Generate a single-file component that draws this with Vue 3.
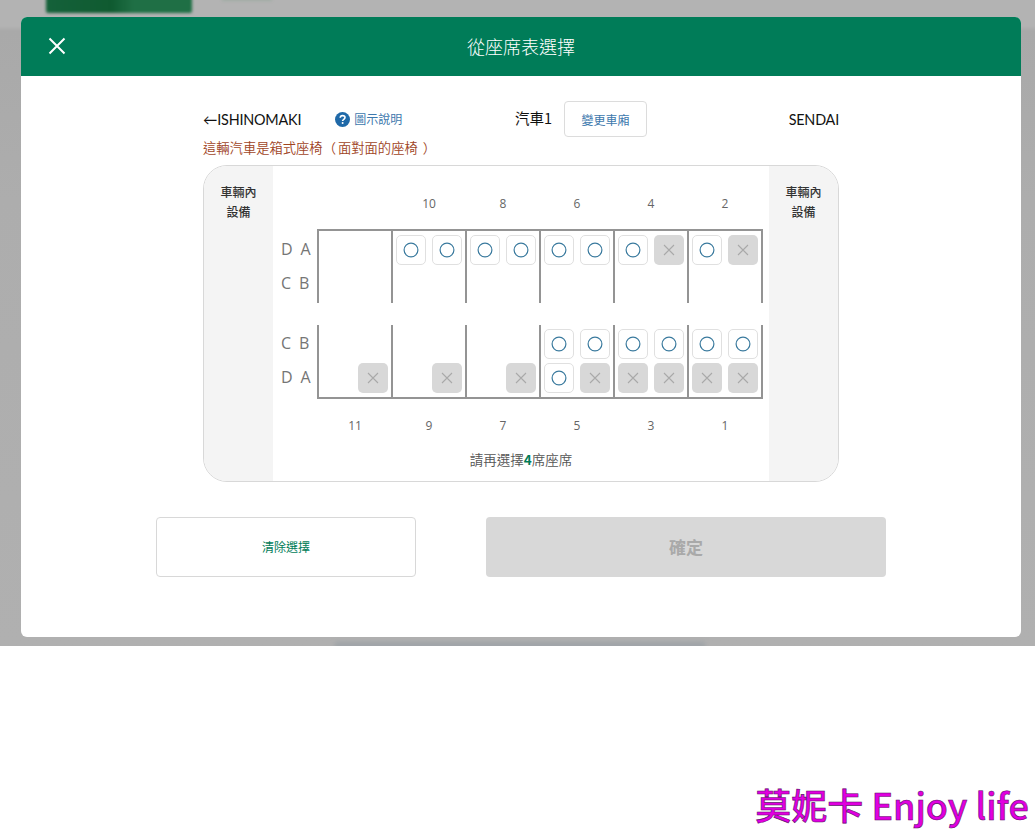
<script setup>
const topNums = [null, 10, 8, 6, 4, 2]
const botNums = [11, 9, 7, 5, 3, 1]
const topCars = [
  ['', '', '', ''],
  ['o', 'o', '', ''],
  ['o', 'o', '', ''],
  ['o', 'o', '', ''],
  ['o', 'x', '', ''],
  ['o', 'x', '', '']
]
const botCars = [
  ['', '', '', 'x'],
  ['', '', '', 'x'],
  ['', '', '', 'x'],
  ['o', 'o', 'o', 'x'],
  ['o', 'o', 'x', 'x'],
  ['o', 'o', 'x', 'x']
]
const topLabels = [['D', 'A'], ['C', 'B']]
const botLabels = [['C', 'B'], ['D', 'A']]
</script>

<template>
  <div class="page">
    <div class="backdrop">
      <div class="blur-green"></div>
      <div class="blur-light"></div>
      <div class="blur-streak"></div>
      <section class="modal">
        <header class="modal-head">
          <svg class="close" width="18" height="18" viewBox="0 0 18 18" aria-label="close">
            <path d="M1.5 1.5 16.5 16.5M16.5 1.5 1.5 16.5" stroke="#fff" stroke-width="2" fill="none" />
          </svg>
          <h1 class="title">從座席表選擇</h1>
        </header>
        <div class="modal-body">
          <div class="content">
            <div class="info-row">
              <div class="info-left">
                <span class="station">←ISHINOMAKI</span>
                <span class="help">
                  <svg width="15" height="15" viewBox="0 0 15 15">
                    <circle cx="7.5" cy="7.5" r="7.5" fill="#1f69a8" />
                    <path d="M5.2 5.8C5.3 4.4 6.3 3.6 7.6 3.6 9 3.6 10 4.4 10 5.6 10 7.3 7.6 7.3 7.6 9" stroke="#fff" stroke-width="1.6" fill="none" />
                    <circle cx="7.6" cy="11.1" r="1" fill="#fff" />
                  </svg>
                  <span class="help-text">圖示說明</span>
                </span>
              </div>
              <div class="info-center">
                <span class="car-name">汽車1</span>
                <button class="change" type="button">變更車廂</button>
              </div>
              <span class="station station-end">SENDAI</span>
            </div>
            <p class="warning">這輛汽車是箱式座椅<span class="paren-open">（</span>面對面的座椅<span class="paren-close">）</span></p>
            <div class="panel">
              <aside class="side">車輛內<br />設備</aside>
              <div class="map">
                <div class="nums nums-top">
                  <span v-for="(n, i) in topNums" :key="i" class="num">{{ n }}</span>
                </div>
                <div class="block">
                  <div class="labels">
                    <div v-for="(r, i) in topLabels" :key="i" class="label-row">
                      <span>{{ r[0] }}</span><span>{{ r[1] }}</span>
                    </div>
                  </div>
                  <div class="cars cars-top">
                    <div v-for="(car, i) in topCars" :key="i" class="car">
                      <div v-for="(s, j) in car" :key="j" class="seat" :class="s">
                        <svg v-if="s === 'o'" width="16" height="16" viewBox="0 0 16 16">
                          <circle cx="8" cy="8" r="6.9" fill="none" stroke="#3a7a9e" stroke-width="1.2" />
                        </svg>
                        <svg v-else-if="s === 'x'" width="12" height="12" viewBox="0 0 12 12">
                          <path d="M1 1 11 11M11 1 1 11" stroke="#a9a9a9" stroke-width="1.1" fill="none" />
                        </svg>
                      </div>
                    </div>
                  </div>
                </div>
                <div class="block block-bot">
                  <div class="labels">
                    <div v-for="(r, i) in botLabels" :key="i" class="label-row">
                      <span>{{ r[0] }}</span><span>{{ r[1] }}</span>
                    </div>
                  </div>
                  <div class="cars cars-bot">
                    <div v-for="(car, i) in botCars" :key="i" class="car">
                      <div v-for="(s, j) in car" :key="j" class="seat" :class="s">
                        <svg v-if="s === 'o'" width="16" height="16" viewBox="0 0 16 16">
                          <circle cx="8" cy="8" r="6.9" fill="none" stroke="#3a7a9e" stroke-width="1.2" />
                        </svg>
                        <svg v-else-if="s === 'x'" width="12" height="12" viewBox="0 0 12 12">
                          <path d="M1 1 11 11M11 1 1 11" stroke="#a9a9a9" stroke-width="1.1" fill="none" />
                        </svg>
                      </div>
                    </div>
                  </div>
                </div>
                <div class="nums nums-bot">
                  <span v-for="n in botNums" :key="n" class="num">{{ n }}</span>
                </div>
                <p class="remain">請再選擇<b>4</b>席座席</p>
              </div>
              <aside class="side">車輛內<br />設備</aside>
            </div>
          </div>
          <div class="actions">
            <button class="btn-clear" type="button">清除選擇</button>
            <button class="btn-ok" type="button" disabled>確定</button>
          </div>
        </div>
      </section>
    </div>
    <div class="watermark">莫妮卡 Enjoy life</div>
  </div>
</template>

<style scoped>
.page {
  width: 1035px;
  height: 833px;
  overflow: hidden;
  background: #fff;
  font-family: "Open Sans", "Noto Sans CJK TC", sans-serif;
}
.backdrop {
  position: relative;
  height: 646px;
  padding: 17px 14px 0 21px;
  box-sizing: border-box;
  overflow: hidden;
  background: linear-gradient(#b3b3b3 0, #b3b3b3 26px, #a9a9a9 31px, #adadad 200px, #b0b0b0 646px);
}
.blur-green {
  position: absolute;
  left: 46px;
  top: -6px;
  width: 146px;
  height: 19px;
  border-radius: 2px;
  background: linear-gradient(90deg, #14613a 0, #0f5a30 45%, #1f6f45 60%, #1f6f45 100%);
  filter: blur(1.5px);
}
.blur-light {
  position: absolute;
  left: 222px;
  top: -3px;
  width: 50px;
  height: 4px;
  background: #a0aca4;
  filter: blur(1.5px);
}
.blur-streak {
  position: absolute;
  left: 335px;
  bottom: -2px;
  width: 370px;
  height: 6px;
  background: #9ea3a7;
  filter: blur(2px);
}
.modal {
  position: relative;
  width: 1000px;
  height: 620px;
  border-radius: 6px;
  overflow: hidden;
  background: #fff;
}
.modal-head {
  position: relative;
  height: 59px;
  display: flex;
  align-items: center;
  justify-content: center;
  background: #007c58;
}
.close {
  position: absolute;
  left: 27px;
  top: 20px;
}
.title {
  margin: 0;
  font-size: 18px;
  font-weight: 300;
  line-height: 59px;
  color: #fff;
  font-family: "Noto Sans CJK TC", sans-serif;
}
.modal-body {
  display: flex;
  flex-direction: column;
  align-items: center;
  padding-top: 25px;
}
.content {
  width: 636px;
}
.info-row {
  display: flex;
  align-items: center;
  height: 36px;
}
.station-end {
  margin-left: auto;
}
.info-left {
  flex: 0 0 312px;
  display: flex;
  align-items: center;
  gap: 34px;
}
.station {
  font-family: "Lato", "Noto Sans CJK TC", sans-serif;
  font-size: 14.4px;
  color: #111;
  letter-spacing: -0.2px;
}
.help {
  display: flex;
  align-items: center;
  gap: 4px;
  font-size: 12px;
  color: #3d78ad;
  font-family: "Noto Sans CJK TC", sans-serif;
}
.help-text {
  padding-bottom: 2px;
}
.info-center {
  display: flex;
  align-items: center;
  gap: 12px;
}
.car-name {
  padding-bottom: 3px;
  font-size: 14.5px;
  color: #111;
  font-family: "Noto Sans CJK TC", sans-serif;
}
.change {
  width: 83px;
  height: 36px;
  padding: 0;
  background: #fff;
  border: 1px solid #dcdcdc;
  border-radius: 4px;
  font-size: 12px;
  color: #3d78ad;
  font-family: "Noto Sans CJK TC", sans-serif;
}
.warning {
  margin: 1px 0 0;
  height: 27px;
  line-height: 19px;
  font-size: 13.3px;
  font-weight: 350;
  color: #a0441e;
  white-space: nowrap;
  font-family: "Noto Sans CJK TC", sans-serif;
}
.paren-open {
  margin-right: 2px;
}
.paren-close {
  margin-left: 5px;
}
.panel {
  display: flex;
  height: 317px;
  box-sizing: border-box;
  border: 1px solid #d8d8d8;
  border-radius: 24px;
  overflow: hidden;
  background: #fff;
}
.side {
  flex: 0 0 69px;
  box-sizing: border-box;
  padding-top: 16px;
  text-align: center;
  font-size: 12px;
  line-height: 20px;
  font-weight: 500;
  color: #333;
  background: #f4f4f4;
  font-family: "Noto Sans CJK TC", sans-serif;
}
.map {
  flex: 1;
  padding-top: 28px;
  min-width: 0;
}
.nums {
  display: flex;
  margin-left: 45px;
  height: 20px;
  width: 444px;
  font-size: 12px;
  line-height: 20px;
  color: #666;
}
.nums-top {
  margin-bottom: 15px;
}
.nums-bot {
  margin-top: 17px;
}
.num {
  flex: 0 0 74px;
  text-align: center;
}
.block {
  display: flex;
}
.block-bot {
  margin-top: 22px;
}
.labels {
  flex: 0 0 44px;
  display: flex;
  flex-direction: column;
  gap: 4px;
  padding-top: 5px;
  box-sizing: border-box;
}
.block-bot .labels {
  padding-top: 3px;
}
.label-row {
  height: 30px;
  display: flex;
  align-items: center;
  padding-left: 8px;
  gap: 8px;
  font-size: 16px;
  color: #757575;
  line-height: 30px;
}
.cars {
  display: flex;
  width: 446px;
  border-right: 2px solid #949494;
  box-sizing: border-box;
}
.cars-top {
  border-top: 2px solid #949494;
  height: 74px;
}
.cars-bot {
  border-bottom: 2px solid #949494;
  height: 74px;
}
.car {
  flex: 0 0 74px;
  box-sizing: border-box;
  border-left: 2px solid #949494;
  padding: 4px 3px;
  display: grid;
  grid-template-columns: 30px 30px;
  grid-template-rows: 30px 30px;
  gap: 4px 6px;
}
.car:last-child {
  flex-basis: 72px;
  padding-right: 1px;
}
.seat {
  box-sizing: border-box;
  border-radius: 5px;
  display: flex;
  align-items: center;
  justify-content: center;
}
.seat.o {
  border: 1px solid #e0e0e0;
  background: #fff;
}
.seat.x {
  background: #d8d8d8;
}
.remain {
  margin: 13px 0 0;
  width: 496px;
  text-align: center;
  font-size: 13.5px;
  font-weight: 350;
  line-height: 20px;
  color: #555;
  font-family: "Noto Sans CJK TC", sans-serif;
}
.remain b {
  font-weight: 700;
  color: #007c58;
}
.actions {
  display: flex;
  gap: 70px;
  margin-top: 35px;
}
.btn-clear {
  width: 260px;
  height: 60px;
  padding: 0 0 2px;
  background: #fff;
  border: 1px solid #d8d8d8;
  border-radius: 4px;
  font-size: 12px;
  color: #007c58;
  font-family: "Noto Sans CJK TC", sans-serif;
}
.btn-ok {
  width: 400px;
  height: 60px;
  padding: 0 0 2px;
  background: #d8d8d8;
  border: 0;
  border-radius: 4px;
  font-size: 17px;
  font-weight: 700;
  color: #a9a9a9;
  font-family: "Noto Sans CJK TC", sans-serif;
}
.watermark {
  margin-top: 133px;
  padding-right: 6px;
  text-align: right;
  font-size: 36px;
  font-weight: 500;
  line-height: 50px;
  white-space: nowrap;
  color: #e000e0;
  -webkit-text-stroke: 0.6px #60106a;
  font-family: "Noto Sans CJK TC", sans-serif;
}
</style>
